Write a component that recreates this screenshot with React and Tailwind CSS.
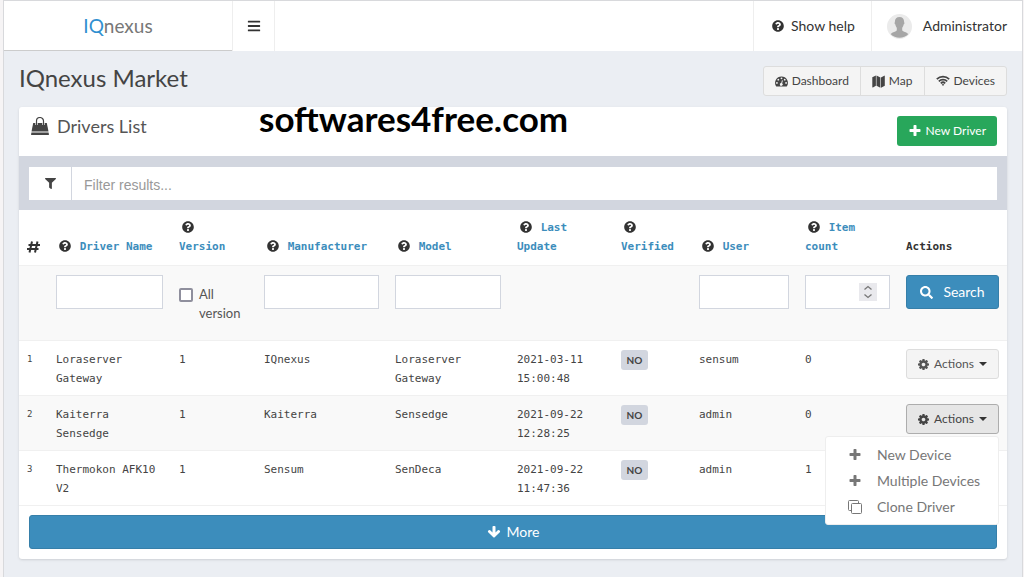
import { useState } from "react";
import {
  FaBars,
  FaFilter,
  FaQuestionCircle,
  FaSearch,
} from "react-icons/fa";

const columns = [
  { label: "Driver Name", width: "w-[123px]" },
  { label: "Version", width: "w-[85px]" },
  { label: "Manufacturer", width: "w-[131px]" },
  { label: "Model", width: "w-[122px]" },
  { label: "Last Update", width: "w-[104px]" },
  { label: "Verified", width: "w-[78px]" },
  { label: "User", width: "w-[106px]" },
  { label: "Item count", width: "w-[101px]" },
];

const drivers = [
  { id: 1, name: "Loraserver Gateway", version: 1, manufacturer: "IQnexus", model: "Loraserver Gateway", updated: "2021-03-11 15:00:48", user: "sensum", items: 0 },
  { id: 2, name: "Kaiterra Sensedge", version: 1, manufacturer: "Kaiterra", model: "Sensedge", updated: "2021-09-22 12:28:25", user: "admin", items: 0 },
  { id: 3, name: "Thermokon AFK10 V2", version: 1, manufacturer: "Sensum", model: "SenDeca", updated: "2021-09-22 11:47:36", user: "admin", items: 1 },
];

const inputClass = "block h-[34px] w-full border border-[#d2d6df] bg-white px-3 outline-none";

function PlusIcon() {
  return (
    <svg viewBox="0 0 1792 1792" className="h-[14px] w-[14px]" fill="currentColor">
      <path d="M1600 736v192q0 40-28 68t-68 28h-416v416q0 40-28 68t-68 28h-192q-40 0-68-28t-28-68v-416h-416q-40 0-68-28t-28-68v-192q0-40 28-68t68-28h416v-416q0-40 28-68t68-28h192q40 0 68 28t28 68v416h416q40 0 68 28t28 68z" />
    </svg>
  );
}

function ArrowDownIcon() {
  return (
    <svg viewBox="0 0 1792 1792" className="h-[14px] w-[14px]" fill="currentColor">
      <path d="M1675 832q0 53-37 90l-651 652q-39 37-91 37-53 0-90-37l-651-652q-38-36-38-90 0-53 38-91l74-75q39-37 91-37 53 0 90 37l294 294v-704q0-52 38-90t90-38h128q52 0 90 38t38 90v704l294-294q37-37 90-37 52 0 91 37l75 75q37 39 37 91z" />
    </svg>
  );
}

function CogIcon() {
  return (
    <svg viewBox="128 128 1536 1536" className="h-[11px] w-[11px]" fill="currentColor">
      <path d="M1152 896q0-106-75-181t-181-75-181 75-75 181 75 181 181 75 181-75 75-181zm512-109v222q0 12-8 23t-20 13l-185 28q-19 54-39 91 35 50 107 138 10 12 10 25t-9 23q-27 37-99 108t-94 71q-12 0-26-9l-138-108q-44 23-91 38-16 136-29 186-7 28-36 28h-222q-14 0-24.500-8.500t-11.500-21.500l-28-184q-49-16-90-37l-141 107q-10 9-25 9-14 0-25-11-126-114-165-168-7-10-7-23 0-12 8-23 15-21 51-66.500t54-70.500q-27-50-41-99l-183-27q-13-2-21-12.500t-8-23.500v-222q0-12 8-23t19-13l186-28q14-46 39-92-40-57-107-138-10-12-10-24 0-10 9-23 26-36 98.500-107.500t94.500-71.500q13 0 26 10l138 107q44-23 91-38 16-136 29-186 7-28 36-28h222q14 0 24.500 8.500t11.500 21.500l28 184q49 16 90 37l142-107q9-9 24-9 13 0 25 10 129 119 165 170 7 8 7 22 0 12-8 23-15 21-51 66.500t-54 70.500q26 50 41 98l183 28q13 2 21 12.500t8 23.500z" />
    </svg>
  );
}

function CloneIcon() {
  return (
    <svg viewBox="0 0 14 14" className="h-[14px] w-[14px]" fill="none" stroke="currentColor" strokeWidth="1">
      <rect x="3.500" y="3.500" width="10" height="10" rx="1" />
      <path d="M10.500 3.500v-2a1 1 0 0 0-1-1h-8a1 1 0 0 0-1 1v8a1 1 0 0 0 1 1h2" />
    </svg>
  );
}

function DashboardIcon() {
  return (
    <svg viewBox="0 0 14 12" className="h-[11px] w-[13px]">
      <path d="M7 .5a7 7 0 0 1 5.900 10.700.6.6 0 0 1-.5.300H1.600a.6.6 0 0 1-.5-.3A7 7 0 0 1 7 .5z" fill="currentColor" />
      <g fill="#f4f4f4">
        <circle cx="2" cy="7.500" r="1" />
        <circle cx="3.500" cy="4" r="1" />
        <circle cx="7" cy="2.500" r="1" />
        <circle cx="10.500" cy="4" r="1" />
        <circle cx="12" cy="7.500" r="1" />
        <path d="M7.500 4.600l1 .3-.8 3a1.600 1.600 0 1 1-1-.3z" />
      </g>
    </svg>
  );
}

function MapIcon() {
  return (
    <svg viewBox="0 0 13 13" className="h-[13px] w-[13px]" fill="currentColor">
      <path d="M.3 2.300 3.900.5v10.200L.9 12.400a.4.4 0 0 1-.6-.3zM4.500.500l3.900 2v10.200l-3.900-2zM9 2.500 12.200.7a.4.4 0 0 1 .6.300v9.800L9 12.700z" />
    </svg>
  );
}

function WifiIcon() {
  return (
    <svg viewBox="0 0 14 12" className="h-3 w-[14px]" fill="none" stroke="currentColor" strokeWidth="1.700">
      <path d="M.8 4.200a9 9 0 0 1 12.400 0M2.800 6.300a6 6 0 0 1 8.400 0M4.800 8.300a3.200 3.200 0 0 1 4.400 0" />
      <path d="M5.700 9.600a2 2 0 0 1 2.600 0L7 11z" fill="currentColor" stroke="none" />
    </svg>
  );
}

function BagIcon() {
  return (
    <svg viewBox="0 0 18 18" className="h-[18px] w-[18px]" fill="currentColor">
      <path d="M2.200 6h13.600l1.700 8.600H.5z" />
      <path d="M.4 15.400h17.200l.3 1.900a.6.6 0 0 1-.6.7H.7a.6.6 0 0 1-.6-.7z" />
      <path d="M5.500 8V4a3.500 3.500 0 0 1 7 0v4" fill="none" stroke="#fff" strokeWidth="2.400" />
      <path d="M5.500 8V4a3.500 3.500 0 0 1 7 0v4" fill="none" stroke="currentColor" strokeWidth="1.200" />
    </svg>
  );
}

function Avatar() {
  return (
    <svg viewBox="0 0 25 25" className="h-[25px] w-[25px]">
      <circle cx="12.500" cy="12.500" r="12.500" fill="#ebebeb" />
      <path
        d="M12.500 3c3 0 4.800 2 4.600 5.200.6.300.3 2-.5 2.400-.3 1.700-.9 2.600-1.400 3.200v2.400c.5 1.400 4.400 1.700 6.200 3.900a12.500 12.500 0 0 1-17.800 0c1.800-2.200 5.700-2.500 6.200-3.900v-2.400c-.5-.6-1.100-1.500-1.400-3.200-.8-.4-1.100-2.100-.5-2.400C7.700 5 9.500 3 12.500 3z"
        fill="#a6a6a6"
      />
    </svg>
  );
}

function Header() {
  return (
    <header className="flex h-[50px] bg-white text-[#333]">
      <a href="#" className="flex w-[228px] items-center justify-center border-b border-[#ccc] text-[19px] text-[#777]">
        <span className="text-[#2f8fd0]">IQ</span>nexus
      </a>
      <button aria-label="Toggle menu" className="flex w-[43px] items-center justify-center border-x border-[#eee]">
        <FaBars size={14} />
      </button>
      <div className="ml-auto flex">
        <a href="#" className="flex items-center gap-[7px] border-l border-[#eee] pl-[18px] pr-4">
          <FaQuestionCircle size={12} />
          Show help
        </a>
        <a href="#" className="flex items-center gap-[11px] border-l border-[#eee] px-[15px]">
          <Avatar />
          Administrator
        </a>
      </div>
    </header>
  );
}

function ActionsButton({ open, onClick }) {
  return (
    <button
      onClick={onClick}
      aria-expanded={open}
      className={
        "flex h-[30px] w-full items-center justify-center gap-[5px] rounded-[3px] border font-[Lato] text-xs " +
        (open ? "border-[#adadad] bg-[#e6e6e6] text-[#444]" : "border-[#ddd] bg-[#f4f4f4] text-[#555]")
      }
    >
      <CogIcon />
      Actions
      <svg viewBox="0 0 8 4" className="h-1 w-2" fill="#333"><path d="M0 0h8L4 4z" /></svg>
    </button>
  );
}

function ActionsMenu() {
  const items = [
    { label: "New Device", icon: <PlusIcon /> },
    { label: "Multiple Devices", icon: <PlusIcon /> },
    { label: "Clone Driver", icon: <CloneIcon /> },
  ];
  return (
    <ul className="absolute right-0 top-full z-10 mt-[2px] w-[174px] rounded-[3px] border border-[#eee] bg-white pb-1 pt-[5px] font-[Lato] text-sm text-[#777]">
      {items.map((item) => (
        <li key={item.label}>
          <button className="flex h-[26px] w-full items-center gap-[13px] whitespace-nowrap pl-5">
            <span className="flex w-[18px] justify-center">{item.icon}</span>
            {item.label}
          </button>
        </li>
      ))}
    </ul>
  );
}

function FilterRow() {
  return (
    <tr className="h-[75px] border-t border-[#f0f0f0] bg-[#f9f9f9] align-top">
      <td></td>
      <td className="p-2 pt-[9px]"><input aria-label="Driver Name" className={inputClass} /></td>
      <td className="p-2 pt-[19px]">
        <label className="flex gap-[6px] font-[Lato] text-[13px] leading-[19px] text-[#555]">
          <input type="checkbox" className="mt-[3px] h-[14px] w-[14px] shrink-0 appearance-none rounded-[2px] border-2 border-[#8f8f9d] bg-white" />
          All version
        </label>
      </td>
      <td className="p-2 pt-[9px]"><input aria-label="Manufacturer" className={inputClass} /></td>
      <td className="p-2 pt-[9px]"><input aria-label="Model" className={inputClass} /></td>
      <td></td>
      <td></td>
      <td className="p-2 pt-[9px]"><input aria-label="User" className={inputClass} /></td>
      <td className="p-2 pt-[9px]">
        <div className="flex h-[34px] items-center border border-[#d2d6df] bg-white pr-3">
          <input type="number" aria-label="Item count" className="h-full w-full min-w-0 appearance-none pl-3 outline-none [-moz-appearance:textfield] [&::-webkit-inner-spin-button]:appearance-none" />
          <svg viewBox="0 0 18 18" className="h-[18px] w-[18px] shrink-0 bg-[#e9e9ed]" fill="none" stroke="#777" strokeWidth="1.300">
            <path d="M5.500 6.500 9 3.500l3.500 3M5.500 11.500l3.500 3 3.500-3" />
          </svg>
        </div>
      </td>
      <td className="p-2 pt-[9px]">
        <button className="flex h-[34px] w-full items-center justify-center gap-[10px] rounded-[3px] border border-[#367fa9] bg-[#3c8dbc] font-[Lato] text-sm text-white">
          <FaSearch size={13} />
          Search
        </button>
      </td>
    </tr>
  );
}

function DriversTable() {
  const [openId, setOpenId] = useState(2);

  return (
    <table className="w-full table-fixed border-collapse text-left font-['DejaVu_Sans_Mono',monospace] text-[11px] leading-[19px] text-[#444]">
      <thead>
        <tr className="align-bottom text-[#333]">
          <th className="w-[29px] p-2 pb-[9px]">
            <svg viewBox="0 0 13 12" className="mb-[3px] h-3 w-[13px]" fill="none" stroke="currentColor" strokeWidth="2" aria-label="Number">
              <path d="M5 .5 2.500 11.500M10.500.500 8 11.500M1.500 4H13M0 8h11.500" />
            </svg>
          </th>
          {columns.map((col) => (
            <th key={col.label} className={"p-2 pb-[9px] " + col.width}>
              <FaQuestionCircle size={12} className="ml-[3px] mr-[2px] inline align-[-2px]" />{" "}
              <a href="#" className="text-[#3c8dbc]">{col.label}</a>
            </th>
          ))}
          <th className="w-[109px] p-2 pb-[9px]">Actions</th>
        </tr>
      </thead>
      <tbody>
        <FilterRow />
        {drivers.map((d) => (
          <tr key={d.id} className="border-y border-[#f0f0f0] align-top odd:bg-[#f9f9f9] even:bg-white">
            <td className="px-2 pb-[7px] pt-[9px] text-[9px]">{d.id}</td>
            <td className="px-2 pb-[7px] pt-[9px]">{d.name}</td>
            <td className="px-2 pb-[7px] pt-[9px]">{d.version}</td>
            <td className="px-2 pb-[7px] pt-[9px]">{d.manufacturer}</td>
            <td className="px-2 pb-[7px] pt-[9px]">{d.model}</td>
            <td className="px-2 pb-[7px] pt-[9px]">{d.updated}</td>
            <td className="px-2 pb-[7px] pt-[9px]">
              <span className="flex h-5 w-[27px] items-center justify-center rounded-[3px] bg-[#d2d6df] font-[Lato] text-[10px] font-bold text-[#444]">NO</span>
            </td>
            <td className="px-2 pb-[7px] pt-[9px]">{d.user}</td>
            <td className="px-2 pb-[7px] pt-[9px]">{d.items}</td>
            <td className="p-2">
              <div className="relative">
                <ActionsButton open={openId === d.id} onClick={() => setOpenId(openId === d.id ? null : d.id)} />
                {openId === d.id && <ActionsMenu />}
              </div>
            </td>
          </tr>
        ))}
      </tbody>
    </table>
  );
}

export default function App() {
  const links = [
    { label: "Dashboard", icon: <DashboardIcon /> },
    { label: "Map", icon: <MapIcon /> },
    { label: "Devices", icon: <WifiIcon /> },
  ];

  return (
    <div className="min-h-screen bg-[#f6f4f5] pl-[3px] pr-px font-[Lato,sans-serif] text-sm">
      <div className="min-h-screen border border-b-0 border-[#d8d9dc] bg-[#ebeef3]">
        <Header />
        <main className="px-[15px] pb-[17px] pt-[15px]">
          <div className="flex h-[30px] items-start justify-between">
            <h1 className="text-2xl leading-6 text-[#444]">IQnexus Market</h1>
            <nav className="flex rounded-[3px] border border-[#ddd] bg-[#f4f4f4] text-xs text-[#444]">
              {links.map((link) => (
                <a key={link.label} href="#" className="flex h-7 items-center gap-1 border-l border-[#ddd] px-[11px] first:border-l-0">
                  {link.icon}
                  {link.label}
                </a>
              ))}
            </nav>
          </div>

          <section className="relative mt-[11px] rounded-[3px] bg-white shadow-sm">
            <p className="absolute left-[240px] top-[-11px] text-[35px] font-bold leading-[44px] text-black">softwares4free.com</p>
            <div className="flex h-[49px] justify-between pl-3 pr-[10px] pt-[9px] text-[#444]">
              <h2 className="flex h-5 items-center gap-2 text-lg leading-5">
                <BagIcon />
                <span className="text-[#555]">Drivers List</span>
              </h2>
              <button className="flex h-[30px] items-center gap-1 rounded-[3px] bg-[#28a75b] px-[11px] text-xs text-white">
                <PlusIcon />
                New Driver
              </button>
            </div>

            <div className="flex h-[54px] bg-[#d2d6df] p-[10px] pt-[11px]">
              <label htmlFor="filter" aria-label="Filter" className="flex w-[43px] items-center justify-center border-r border-[#d2d6df] bg-white text-[#444]">
                <FaFilter size={11} />
              </label>
              <input id="filter" placeholder="Filter results..." className="min-w-0 flex-1 bg-white px-3 pt-[2px] font-['Liberation_Sans',sans-serif] text-sm outline-none placeholder:text-[#999]" />
            </div>

            <DriversTable />

            <div className="p-[10px] pt-[9px]">
              <button className="flex h-[34px] w-full items-center justify-center gap-[6px] rounded-[3px] border border-[#367fa9] bg-[#3c8dbc] text-white">
                <ArrowDownIcon />
                More
              </button>
            </div>
          </section>
        </main>
      </div>
    </div>
  );
}
